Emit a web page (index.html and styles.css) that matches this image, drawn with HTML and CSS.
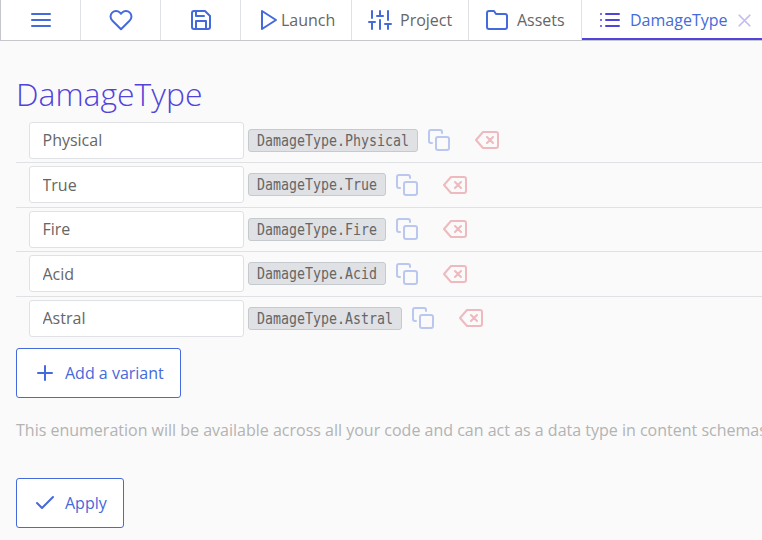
FILE: index.html
```
<!DOCTYPE html>
<html lang="en">
<head>
<meta charset="utf-8">
<title>DamageType</title>
<link rel="stylesheet" href="styles.css">
</head>
<body>
<svg class="defs" width="0" height="0">
  <symbol id="copy" viewBox="0 0 24 24"><rect x="9" y="9" width="13" height="13" rx="2"/><path d="M5 15H4a2 2 0 0 1-2-2V4a2 2 0 0 1 2-2h9a2 2 0 0 1 2 2v1"/></symbol>
  <symbol id="delete" viewBox="0 0 24 24"><path d="M21 4H8l-7 8 7 8h13a2 2 0 0 0 2-2V6a2 2 0 0 0-2-2zM18 9l-6 6M12 9l6 6"/></symbol>
</svg>
<nav class="tabs">
  <div class="tab square"><svg class="icon" viewBox="0 0 24 24"><path d="M3 12h18M3 6h18M3 18h18"/></svg></div>
  <div class="tab square"><svg class="icon" viewBox="0 0 24 24"><path d="M20.84 4.61a5.5 5.5 0 0 0-7.78 0L12 5.67l-1.06-1.06a5.5 5.5 0 0 0-7.78 7.78l1.06 1.06L12 21.23l7.78-7.78 1.06-1.06a5.5 5.5 0 0 0 0-7.78z"/></svg></div>
  <div class="tab square"><svg class="icon" viewBox="0 0 24 24"><path d="M19 21H5a2 2 0 0 1-2-2V5a2 2 0 0 1 2-2h11l5 5v11a2 2 0 0 1-2 2zM17 21v-8H7v8M7 3v5h8"/></svg></div>
  <div class="tab launch"><svg class="icon" viewBox="0 0 24 24"><path d="M5 3l14 9-14 9z"/></svg><span>Launch</span></div>
  <div class="tab project"><svg class="icon" viewBox="0 0 24 24"><path d="M4 21v-7M4 10V3M12 21v-9M12 8V3M20 21v-5M20 12V3M1 14h6M9 8h6M17 16h6"/></svg><span>Project</span></div>
  <div class="tab assets"><svg class="icon" viewBox="0 0 24 24"><path d="M22 19a2 2 0 0 1-2 2H4a2 2 0 0 1-2-2V5a2 2 0 0 1 2-2h5l2 3h9a2 2 0 0 1 2 2z"/></svg><span>Assets</span></div>
  <div class="tab active"><svg class="icon" viewBox="0 0 24 24"><path d="M8 6h13M8 12h13M8 18h13M3 6h.01M3 12h.01M3 18h.01"/></svg><span>DamageType</span><svg class="icon close" viewBox="0 0 24 24"><path d="M18 6L6 18M6 6l12 12"/></svg></div>
</nav>
<main>
  <h1>DamageType</h1>
  <ul class="variants">
    <li><input type="text" value="Physical"><code><span>DamageType.Physical</span></code><svg class="icon copy"><use href="#copy"/></svg><svg class="icon delete"><use href="#delete"/></svg></li>
    <li><input type="text" value="True"><code><span>DamageType.True</span></code><svg class="icon copy"><use href="#copy"/></svg><svg class="icon delete"><use href="#delete"/></svg></li>
    <li><input type="text" value="Fire"><code><span>DamageType.Fire</span></code><svg class="icon copy"><use href="#copy"/></svg><svg class="icon delete"><use href="#delete"/></svg></li>
    <li><input type="text" value="Acid"><code><span>DamageType.Acid</span></code><svg class="icon copy"><use href="#copy"/></svg><svg class="icon delete"><use href="#delete"/></svg></li>
    <li><input type="text" value="Astral"><code><span>DamageType.Astral</span></code><svg class="icon copy"><use href="#copy"/></svg><svg class="icon delete"><use href="#delete"/></svg></li>
  </ul>
  <button><svg class="icon" viewBox="0 0 24 24"><path d="M12 5v14M5 12h14"/></svg><span>Add a variant</span></button>
  <p>This enumeration will be available across all your code and can act as a data type in content schemas.</p>
  <button><svg class="icon" viewBox="0 0 24 24"><path d="M20 6L9 17l-5-5"/></svg><span>Apply</span></button>
</main>
</body>
</html>
```
FILE: styles.css
```
* { box-sizing: border-box; }
body {
  margin: 0;
  height: 540px;
  overflow: hidden;
  background: #fafafa;
  color: #666;
  font: 16px/24px "Open Sans", sans-serif;
}
.defs { display: none; }
.icon {
  width: 24px;
  height: 24px;
  flex: none;
  fill: none;
  stroke: #446adb;
  stroke-width: 2;
  stroke-linecap: round;
  stroke-linejoin: round;
}
.tabs {
  display: flex;
  height: 41px;
  background: #fff;
  border-bottom: 1px solid #c5c7cc;
  border-left: 1px solid #c5c7cc;
}
.tab {
  display: flex;
  align-items: center;
  flex: none;
  height: 40px;
  border-right: 1px solid #dfe1e5;
  white-space: nowrap;
}
.square { width: 80px; justify-content: center; }
.launch { width: 111px; padding-left: 16px; }
.project { width: 117px; padding-left: 16px; gap: 8px; }
.assets { width: 113px; padding-left: 16px; gap: 8px; }
.active {
  position: relative;
  width: 190px;
  padding-left: 16px;
  gap: 8px;
  color: #446adb;
}
.active::after {
  content: "";
  position: absolute;
  left: 0;
  right: 0;
  bottom: 0;
  height: 2px;
  background: #5144db;
}
.active .icon { stroke: #5144db; }
.active .close { opacity: .35; margin-left: -1px; width: 21px; height: 21px; }
main { padding: 35px 0 0 16px; }
h1 {
  margin: 0;
  height: 42.4px;
  color: #5144db;
  font-size: 31.9px;
  line-height: 36px;
  font-weight: 300;
}
.variants { margin: 0; padding: 0; list-style: none; }
.variants li {
  display: flex;
  align-items: center;
  height: 44.6px;
  padding-left: 13px;
  border-bottom: 1px solid #dfe1e5;
}
.variants li:last-child { border-bottom: 0; height: 43.2px; }
input {
  width: 215px;
  height: 37px;
  padding: 0 12.5px;
  border: 1px solid #dfe1e5;
  border-radius: 3px;
  background: #fff;
  color: #666;
  font: inherit;
}
code {
  height: 23px;
  margin-left: 4px;
  padding: 0 8px;
  border: 1px solid #c5cace;
  border-radius: 3px;
  background: #dfe1e5;
  font: 13.29px/21px "DejaVu Sans Mono", monospace;
}
code span { display: block; transform: scaleY(1.2); }
.copy { margin-left: 9px; opacity: .35; }
.delete { margin-left: 24px; opacity: .35; stroke: #db4451; }
button {
  display: flex;
  align-items: center;
  gap: 8px;
  height: 50px;
  padding: 0 16px;
  border: 1px solid #446adb;
  border-radius: 3px;
  background: #fff;
  color: #446adb;
  font: inherit;
}
.variants + button { margin-top: 8px; }
p {
  margin: 20px 0 36px;
  color: #b3b3b3;
  white-space: nowrap;
}
```
